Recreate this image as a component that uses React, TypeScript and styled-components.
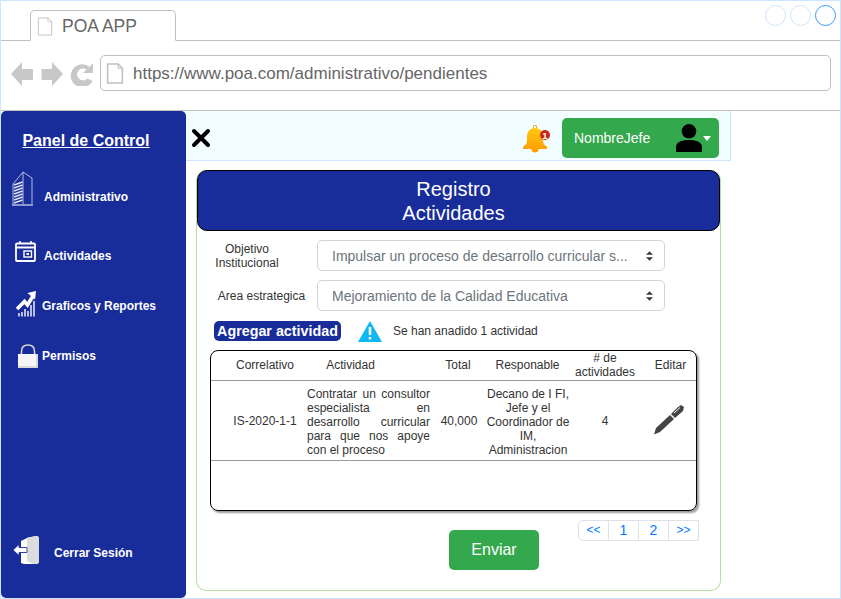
import { FC, ReactNode } from "react";
import styled, { createGlobalStyle } from "styled-components";

const GlobalStyle = createGlobalStyle`
  html, body {
    margin: 0;
    padding: 0;
    background: #ffffff;
    font-family: "Liberation Sans", Arial, sans-serif;
  }
`;

const Frame = styled.div`
  box-sizing: border-box;
  width: 841px;
  height: 599px;
  border: 1px solid #cce5ff;
  background: #ffffff;
  overflow: hidden;
  display: flex;
  flex-direction: column;
`;
const TabStrip = styled.div`
  box-sizing: border-box;
  height: 40px;
  flex: none;
  padding: 9px 4px 0 29px;
  border-bottom: 1px solid #c0c0c0;
  display: flex;
  justify-content: space-between;
  align-items: flex-start;
`;
const Tab = styled.div`
  box-sizing: border-box;
  width: 146px;
  height: 31px;
  padding: 6px 0 0 6px;
  border: 1px solid #c0c0c0;
  border-bottom-color: #ffffff;
  border-radius: 5px 5px 0 0;
  display: flex;
  align-items: flex-start;
  gap: 9px;
  color: #666666;
  font-size: 17.5px;
  line-height: 20px;
`;
const TabTitle = styled.span`
  margin-top: -1px;
`;
const Dots = styled.div`
  display: flex;
  gap: 4px;
  margin-top: -5px;
`;
const Dot = styled.span<{ $active?: boolean }>`
  box-sizing: border-box;
  width: 21px;
  height: 21px;
  border-radius: 50%;
  border: 1px solid ${(p) => (p.$active ? "#3399ff" : "#cce5ff")};
`;
const AddressRow = styled.div`
  box-sizing: border-box;
  height: 70px;
  flex: none;
  padding: 14px 9px 0 10px;
  border-bottom: 1px solid #c0c0c0;
  display: flex;
  align-items: flex-start;
`;
const NavIcons = styled.div`
  width: 89px;
  height: 36px;
  flex: none;
  display: flex;
  align-items: center;
`;
const UrlBox = styled.div`
  box-sizing: border-box;
  flex: 1;
  height: 36px;
  padding: 0 0 0 5px;
  border: 1px solid #c0c0c0;
  border-radius: 5px;
  display: flex;
  align-items: center;
  gap: 9px;
  color: #666666;
  font-size: 17px;
`;
const UrlText = styled.span`
  margin-top: 2px;
`;
const Body = styled.div`
  flex: 1;
  min-height: 0;
  display: flex;
`;
const Sidebar = styled.nav`
  box-sizing: border-box;
  width: 185px;
  flex: none;
  height: 487px;
  padding-top: 20px;
  background: #182c9a;
  border-radius: 5px;
  color: #ffffff;
  display: flex;
  flex-direction: column;
`;
const SideTitle = styled.div`
  padding-right: 15px;
  text-align: center;
  font-size: 16px;
  line-height: 20px;
  font-weight: bold;
  text-decoration: underline;
  margin-bottom: 16px;
`;
const SideItem = styled.div<{ $h: number; $gap: number; $pl: number }>`
  box-sizing: border-box;
  height: ${(p) => p.$h}px;
  padding-left: ${(p) => p.$pl}px;
  display: flex;
  align-items: center;
  gap: ${(p) => p.$gap}px;
  font-size: 12px;
  font-weight: bold;
`;
const SideIcon = styled.span<{ $dy: number }>`
  display: flex;
  flex: none;
  transform: translateY(${(p) => p.$dy}px);
`;
const SideSpacer = styled.div`
  flex: 1;
`;
const Main = styled.main`
  width: 545px;
  flex: none;
`;
const TopBar = styled.header`
  box-sizing: border-box;
  height: 50px;
  padding: 7px 11px 0 5px;
  background: #f2fdff;
  border-bottom: 1px solid #cce5ff;
  border-right: 1px solid #cce5ff;
  display: flex;
  align-items: flex-start;
`;
const CloseSlot = styled.div`
  margin-top: 10px;
  display: flex;
`;
const BellSlot = styled.div`
  margin-left: auto;
  margin-right: 12px;
  margin-top: 7px;
  display: flex;
`;
const UserButton = styled.div`
  box-sizing: border-box;
  width: 157px;
  height: 40px;
  padding: 0 8px 0 12px;
  background: #34a84d;
  border-radius: 5px;
  color: #ffffff;
  font-size: 14px;
  display: flex;
  align-items: center;
`;
const UserName = styled.span`
  flex: 1;
`;
const Caret = styled.span`
  width: 0;
  height: 0;
  margin-left: 1px;
  border-left: 4.5px solid transparent;
  border-right: 4.5px solid transparent;
  border-top: 5px solid #ffffff;
`;
const Card = styled.section`
  box-sizing: border-box;
  width: 525px;
  height: 421px;
  margin: 9px 0 0 10px;
  border: 1px solid #b4e2a0;
  border-top: none;
  border-radius: 10px;
  display: flex;
  flex-direction: column;
`;
const CardHeader = styled.h1`
  box-sizing: border-box;
  height: 61px;
  margin: 0;
  padding: 6px 10px 0 0;
  background: #182c9a;
  border: 1px solid #000000;
  border-radius: 10px;
  color: #ffffff;
  text-align: center;
  font-size: 20px;
  line-height: 24px;
  font-weight: normal;
`;
const FieldRow = styled.div<{ $top: number }>`
  margin-top: ${(p) => p.$top}px;
  display: flex;
  align-items: center;
`;
const FieldLabel = styled.label<{ $pl?: number; $pr?: number }>`
  box-sizing: border-box;
  width: 120px;
  flex: none;
  padding: 0 ${(p) => p.$pr || 0}px 0 ${(p) => p.$pl || 0}px;
  text-align: center;
  color: #333333;
  font-size: 12px;
  line-height: 14px;
`;
const SelectBox = styled.div`
  box-sizing: border-box;
  width: 348px;
  height: 31px;
  padding: 0 11px 0 14px;
  border: 1px solid #ced4da;
  border-radius: 5px;
  background: #ffffff;
  color: #6c757d;
  font-size: 14px;
  display: flex;
  align-items: center;
  justify-content: space-between;
`;
const SelectText = styled.span`
  white-space: nowrap;
`;
const ActionRow = styled.div`
  margin: 9px 0 0 17px;
  display: flex;
  align-items: center;
  height: 22px;
`;
const AddButton = styled.div`
  box-sizing: border-box;
  width: 127px;
  height: 20px;
  background: #182c9a;
  border-radius: 5px;
  color: #ffffff;
  font-size: 14.3px;
  font-weight: bold;
  line-height: 20px;
  text-align: center;
  margin-right: 17px;
`;
const Notice = styled.span`
  margin-left: 11px;
  font-size: 12px;
  color: #333333;
`;
const TableCard = styled.div`
  box-sizing: border-box;
  width: 487px;
  height: 161px;
  margin: 8px 0 0 13px;
  border: 1px solid #000000;
  border-radius: 8px;
  box-shadow: 2px 2px 2px #999999;
  overflow: hidden;
`;
const Table = styled.table`
  width: 485px;
  table-layout: fixed;
  border-collapse: collapse;
  font-size: 12px;
  color: #333333;
`;
const HeadCell = styled.th<{ $w: number; $pl?: number; $pr?: number }>`
  width: ${(p) => p.$w}px;
  height: 29px;
  padding: 0 ${(p) => p.$pr || 0}px 0 ${(p) => p.$pl || 0}px;
  box-sizing: border-box;
  font-weight: normal;
  line-height: 14px;
  text-align: center;
  border-bottom: 1px solid #999999;
`;
const Cell = styled.td<{ $pl?: number; $pt?: number }>`
  height: 80px;
  padding: ${(p) => p.$pt ?? 2}px 0 0 ${(p) => p.$pl || 0}px;
  box-sizing: border-box;
  line-height: 14px;
  text-align: center;
  border-bottom: 1px solid #999999;
`;
const ActivityCell = styled(Cell)`
  padding: 4px 4px 0;
  text-align: justify;
`;
const Footer = styled.div`
  display: flex;
  align-items: flex-start;
  margin: 9px 0 0 252px;
`;
const SendButton = styled.div`
  width: 90px;
  height: 40px;
  margin: 10px 39px 0 0;
  background: #34a84d;
  border-radius: 5px;
  color: #ffffff;
  font-size: 16px;
  line-height: 40px;
  text-align: center;
`;
const Pager = styled.div`
  box-sizing: border-box;
  width: 121px;
  height: 21px;
  display: flex;
  border: 1px solid #dee2e6;
  border-radius: 5px 0 0 5px;
`;
const PageCell = styled.span<{ $small?: boolean }>`
  flex: 1;
  border-left: 1px solid #dee2e6;
  color: #007bff;
  font-size: ${(p) => (p.$small ? 12 : 14)}px;
  line-height: 19px;
  text-align: center;
  &:first-child {
    border-left: none;
  }
`;

const FileIcon: FC<{ w: number; h: number; sw: number }> = ({ w, h, sw }) => (
  <svg width={w} height={h} viewBox="0 0 16 20" style={{ flex: "none" }}>
    <path d="M1 1H11L15 5V19H1Z" fill="#fff" stroke="#c0c0c0" strokeWidth={sw} />
    <path d="M11 1V5H15" fill="none" stroke="#c0c0c0" strokeWidth={sw * 0.7} />
  </svg>
);

const NavArrows: FC = () => (
  <svg width="84" height="24" viewBox="0 0 84 24" style={{ marginTop: 2 }}>
    <path d="M0 12 11 0V7H22V18H11V24Z" fill="#c8c8c8" />
    <path d="M52 12 41 0V7H30.500V18H41V24Z" fill="#c8c8c8" />
    <path d="M82 1V11H72L75.500 7.500A6 6 0 1 0 76.500 16.500L81.500 19A11.500 11.500 0 1 1 78.500 5Z" fill="#c8c8c8" />
  </svg>
);

const Building: FC = () => (
  <svg width="21" height="35" viewBox="0 0 21 35">
    <path d="M1 33V13L11 1 20 7V33" fill="none" stroke="#b4bce6" strokeWidth="1" />
    <path d="M11 1V33" stroke="#b4bce6" strokeWidth="1" />
    {[14, 17, 20, 23, 26, 29, 32].map((y) => (
      <path key={y} d={`M2 ${y}L10.500 ${y - 3}`} stroke="#dfe3f6" strokeWidth="1.500" />
    ))}
    <path d="M0 34H21" stroke="#b4bce6" strokeWidth="1.500" />
  </svg>
);

const Calendar: FC = () => (
  <svg width="21" height="21" viewBox="0 0 21 21">
    <rect x="1" y="2.500" width="19" height="17.500" rx="1" fill="none" stroke="#fff" strokeWidth="1.800" />
    <path d="M1 6.500H20" stroke="#fff" strokeWidth="2" />
    <path d="M5 0V3M16 0V3" stroke="#fff" strokeWidth="1.600" />
    <rect x="9" y="10" width="7.500" height="6" fill="none" stroke="#fff" strokeWidth="1.400" />
    <rect x="11.500" y="12" width="2.500" height="2" fill="#fff" />
  </svg>
);

const ChartUp: FC = () => (
  <svg width="20" height="26" viewBox="0 0 20 26">
    <path d="M1 18 8.500 10.500 11.500 14 17 5" fill="none" stroke="#fff" strokeWidth="3.600" />
    <path d="M20 0 11.500 2 19 8.500Z" fill="#fff" />
    {[
      [3, 22],
      [6, 21],
      [9, 18],
      [12, 20],
      [15, 14],
      [18, 10],
    ].map(([x, top]) => (
      <path key={x} d={`M${x} 25.500V${top}`} stroke="#eceef9" strokeWidth="1.500" />
    ))}
  </svg>
);

const Lock: FC = () => (
  <svg width="20" height="24" viewBox="0 0 20 24">
    <path d="M3.500 11V7.500C3.500 3 6 1 10 1S16.500 3 16.500 7.500V11" fill="none" stroke="#dcdcdc" strokeWidth="1.500" />
    <rect x="0" y="10" width="20" height="14" fill="#f6f6f6" />
    <path d="M0 23H20M19 10V24" stroke="#cfcfcf" strokeWidth="1.500" />
  </svg>
);

const Logout: FC = () => (
  <svg width="27" height="28" viewBox="0 0 27 28">
    <path d="M9 5 16 1.500 24 0C26 0 27 1 27 3V25C27 27 26 28 24 28H12L9 27V17H14V11H9Z" fill="#ffffff" />
    <path d="M15 2 24 0C26 0 27 1 27 3V25C27 27 26 28 24 28H21L15 25Z" fill="#dcdcdc" />
    <path d="M1 14 7 8.500V11.500H15V16.500H7V19.500Z" fill="#ffffff" stroke="#182c9a" strokeWidth="0.800" />
  </svg>
);

const Bell: FC = () => (
  <svg width="27" height="28" viewBox="0 0 27 28">
    <defs>
      <linearGradient id="bellFill" x1="0" y1="0" x2="0" y2="1">
        <stop offset="0" stopColor="#ffc914" />
        <stop offset="1" stopColor="#ffa000" />
      </linearGradient>
    </defs>
    <circle cx="12" cy="2" r="1.700" fill="none" stroke="#f5a800" strokeWidth="1" />
    <path
      d="M12 3C17.500 3 20 7 20 12V16C20 19 22 20.500 24 22C24.500 22.800 24 24 23 24H1C0 24 -0.500 22.800 0 22C2 20.500 4 19 4 16V12C4 7 6.500 3 12 3Z"
      fill="url(#bellFill)"
    />
    <path d="M8.500 24A3.500 3.500 0 0 0 15.500 24Z" fill="#ffa000" />
    <circle cx="22" cy="10" r="5" fill="#c62a12" />
    <text x="22" y="13.500" fontSize="9.500" fontWeight="bold" textAnchor="middle" fill="#fff" fontFamily="Liberation Sans">
      1
    </text>
  </svg>
);

const UserIcon: FC = () => (
  <svg width="26" height="28" viewBox="0 0 26 28">
    <circle cx="13" cy="7.300" r="7.300" fill="#000" />
    <path d="M0 28V23C0 18.500 5 16 13 16S26 18.500 26 23V28Z" fill="#000" />
  </svg>
);

const Close: FC = () => (
  <svg width="20" height="20" viewBox="0 0 20 20">
    <path d="M3 3 17 17M17 3 3 17" stroke="#000" strokeWidth="4" strokeLinecap="round" />
  </svg>
);

const SelectArrows: FC = () => (
  <svg width="7" height="10" viewBox="0 0 8 11">
    <path d="M4 0 8 4H0ZM4 11 0 7H8Z" fill="#343a40" />
  </svg>
);

const WarnIcon: FC = () => (
  <svg width="24" height="21" viewBox="0 0 24 21">
    <path d="M12 0 24 21H0Z" fill="#0db9f0" />
    <path d="M12 6V14M12 16V18.500" stroke="#fff" strokeWidth="2.600" />
  </svg>
);

const Pen: FC = () => (
  <svg width="31" height="31" viewBox="0 0 31 31">
    <path d="M0 30.500 2 24 16 11 20 15 6 28Z" fill="#444444" />
    <path d="M17 10 24 3 27 1 30 3 29 7 21 14Z" fill="#444444" />
    <path d="M20 9 26 3.500" stroke="#ffffff" strokeWidth="1" />
  </svg>
);

const sideItems: { label: string; icon: ReactNode; h: number; gap: number; pl: number; dy: number }[] = [
  { label: "Administrativo", icon: <Building />, h: 59, gap: 11, pl: 11, dy: -8 },
  { label: "Actividades", icon: <Calendar />, h: 59, gap: 8, pl: 14, dy: -4 },
  { label: "Graficos y Reportes", icon: <ChartUp />, h: 42, gap: 6, pl: 15, dy: -2 },
  { label: "Permisos", icon: <Lock />, h: 58, gap: 4, pl: 17, dy: 0 },
];

export default function App() {
  return (
    <>
      <GlobalStyle />
      <Frame>
        <TabStrip>
          <Tab>
            <FileIcon w={16} h={19} sw={1} />
            <TabTitle>POA APP</TabTitle>
          </Tab>
          <Dots>
            <Dot />
            <Dot />
            <Dot $active />
          </Dots>
        </TabStrip>
        <AddressRow>
          <NavIcons>
            <NavArrows />
          </NavIcons>
          <UrlBox>
            <FileIcon w={18} h={21} sw={1.500} />
            <UrlText>https://www.poa.com/administrativo/pendientes</UrlText>
          </UrlBox>
        </AddressRow>
        <Body>
          <Sidebar>
            <SideTitle>Panel de Control</SideTitle>
            {sideItems.map((item) => (
              <SideItem key={item.label} $h={item.h} $gap={item.gap} $pl={item.pl}>
                <SideIcon $dy={item.dy}>{item.icon}</SideIcon>
                {item.label}
              </SideItem>
            ))}
            <SideSpacer />
            <SideItem $h={90} $gap={15} $pl={11}>
              <SideIcon $dy={-3}>
                <Logout />
              </SideIcon>
              Cerrar Sesión
            </SideItem>
          </Sidebar>
          <Main>
            <TopBar>
              <CloseSlot>
                <Close />
              </CloseSlot>
              <BellSlot>
                <Bell />
              </BellSlot>
              <UserButton>
                <UserName>NombreJefe</UserName>
                <UserIcon />
                <Caret />
              </UserButton>
            </TopBar>
            <Card>
              <CardHeader>
                Registro
                <br />
                Actividades
              </CardHeader>
              <FieldRow $top={9}>
                <FieldLabel $pr={20}>
                  Objetivo
                  <br />
                  Institucional
                </FieldLabel>
                <SelectBox>
                  <SelectText>Impulsar un proceso de desarrollo curricular s...</SelectText>
                  <SelectArrows />
                </SelectBox>
              </FieldRow>
              <FieldRow $top={9}>
                <FieldLabel $pl={9}>Area estrategica</FieldLabel>
                <SelectBox>
                  <SelectText>Mejoramiento de la Calidad Educativa</SelectText>
                  <SelectArrows />
                </SelectBox>
              </FieldRow>
              <ActionRow>
                <AddButton>Agregar actividad</AddButton>
                <WarnIcon />
                <Notice>Se han anadido 1 actividad</Notice>
              </ActionRow>
              <TableCard>
                <Table>
                  <thead>
                    <tr>
                      <HeadCell $w={92} $pl={16}>Correlativo</HeadCell>
                      <HeadCell $w={131} $pr={36}>Actividad</HeadCell>
                      <HeadCell $w={48}>Total</HeadCell>
                      <HeadCell $w={90} $pl={1}>Responable</HeadCell>
                      <HeadCell $w={66}>
                        # de
                        <br />
                        actividades
                      </HeadCell>
                      <HeadCell $w={58} $pl={7}>Editar</HeadCell>
                    </tr>
                  </thead>
                  <tbody>
                    <tr>
                      <Cell $pl={16}>IS-2020-1-1</Cell>
                      <ActivityCell>
                        Contratar un consultor especialista en desarrollo curricular para que nos apoye con el proceso
                      </ActivityCell>
                      <Cell $pl={2}>40,000</Cell>
                      <Cell $pt={4} $pl={2}>
                        Decano de I FI,
                        <br />
                        Jefe y el
                        <br />
                        Coordinador de
                        <br />
                        IM,
                        <br />
                        Administracion
                      </Cell>
                      <Cell>4</Cell>
                      <Cell $pl={5}>
                        <Pen />
                      </Cell>
                    </tr>
                  </tbody>
                </Table>
              </TableCard>
              <Footer>
                <SendButton>Enviar</SendButton>
                <Pager>
                  <PageCell $small>&lt;&lt;</PageCell>
                  <PageCell>1</PageCell>
                  <PageCell>2</PageCell>
                  <PageCell $small>&gt;&gt;</PageCell>
                </Pager>
              </Footer>
            </Card>
          </Main>
        </Body>
      </Frame>
    </>
  );
}
